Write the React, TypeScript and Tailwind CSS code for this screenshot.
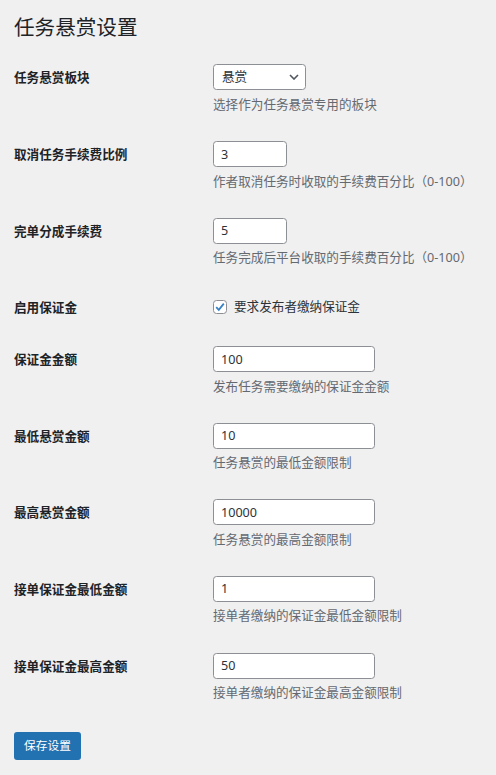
import React from 'react';

type Field = {
    label: string;
    value: string;
    desc: string;
    wide?: boolean;
};

const FONT = { fontFamily: '"Noto Sans", "Noto Sans CJK SC", sans-serif' };

const topFields: Field[] = [
    { label: '取消任务手续费比例', value: '3', desc: '作者取消任务时收取的手续费百分比（0-100）' },
    { label: '完单分成手续费', value: '5', desc: '任务完成后平台收取的手续费百分比（0-100）' },
];

const bottomFields: Field[] = [
    { label: '保证金金额', value: '100', desc: '发布任务需要缴纳的保证金金额', wide: true },
    { label: '最低悬赏金额', value: '10', desc: '任务悬赏的最低金额限制', wide: true },
    { label: '最高悬赏金额', value: '10000', desc: '任务悬赏的最高金额限制', wide: true },
    { label: '接单保证金最低金额', value: '1', desc: '接单者缴纳的保证金最低金额限制', wide: true },
    { label: '接单保证金最高金额', value: '50', desc: '接单者缴纳的保证金最高金额限制', wide: true },
];

const Label = ({ children }: { children: React.ReactNode }) => (
    <div className="w-[199px] shrink-0 pt-5 text-[12.6px] font-bold leading-[15px] text-[#1d2327]">
        {children}
    </div>
);

const Desc = ({ children }: { children: React.ReactNode }) => (
    <p className="mt-[5.5px] text-[12.6px] leading-[17px] text-[#646970]">{children}</p>
);

const InputRow = ({ field }: { field: Field }) => (
    <div className="flex h-[76.6px]">
        <Label>{field.label}</Label>
        <div className="pt-[14px]">
            <input
                readOnly
                value={field.value}
                className={`block h-[26px] rounded-[3.5px] border border-[#8c8f94] bg-white px-[7px] text-[12.6px] text-[#2c3338] outline-none ${
                    field.wide ? 'w-[162px]' : 'w-[74px]'
                }`}
            />
            <Desc>{field.desc}</Desc>
        </div>
    </div>
);

export default function App() {
    return (
        <div className="min-h-screen bg-[#f0f0f1] pl-[14px]" style={FONT}>
            <h1 className="pt-[14px] pb-[9px] text-[20.6px] font-normal leading-[27px] text-[#1d2327]">
                任务悬赏设置
            </h1>

            {/* select row */}
            <div className="flex h-[77px]">
                <Label>任务悬赏板块</Label>
                <div className="pt-[14px]">
                    <div className="flex h-[26px] w-[93px] items-center justify-between rounded-[3.5px] border border-[#8c8f94] bg-white pl-[8px] pr-[6px] text-[12.6px] text-[#2c3338]">
                        <span>悬赏</span>
                        <svg width="10" height="6" viewBox="0 0 10 6" fill="none">
                            <polyline points="1,1 5,5 9,1" stroke="#50575e" strokeWidth="1.6" />
                        </svg>
                    </div>
                    <Desc>选择作为任务悬赏专用的板块</Desc>
                </div>
            </div>

            {topFields.map((f) => (
                <InputRow key={f.label} field={f} />
            ))}

            {/* checkbox row */}
            <div className="flex h-[52px]">
                <Label>启用保证金</Label>
                <label className="flex items-center gap-[7px] pt-[19px] self-start text-[12.6px] leading-[15px] text-[#2c3338]">
                    <span className="flex h-[14px] w-[14px] items-center justify-center rounded-[3.5px] border border-[#8c8f94] bg-white">
                        <svg width="12" height="12" viewBox="0 0 12 12" fill="none">
                            <path d="M2.2 6.2 L4.8 8.8 L9.8 2.6" stroke="#3582c4" strokeWidth="1.8" />
                        </svg>
                    </span>
                    要求发布者缴纳保证金
                </label>
            </div>

            {bottomFields.map((f) => (
                <InputRow key={f.label} field={f} />
            ))}

            <div className="pt-[17px]">
                <button className="h-[28px] w-[67px] rounded-[3px] bg-[#2271b1] text-[11.7px] text-white">
                    保存设置
                </button>
            </div>
        </div>
    );
}
